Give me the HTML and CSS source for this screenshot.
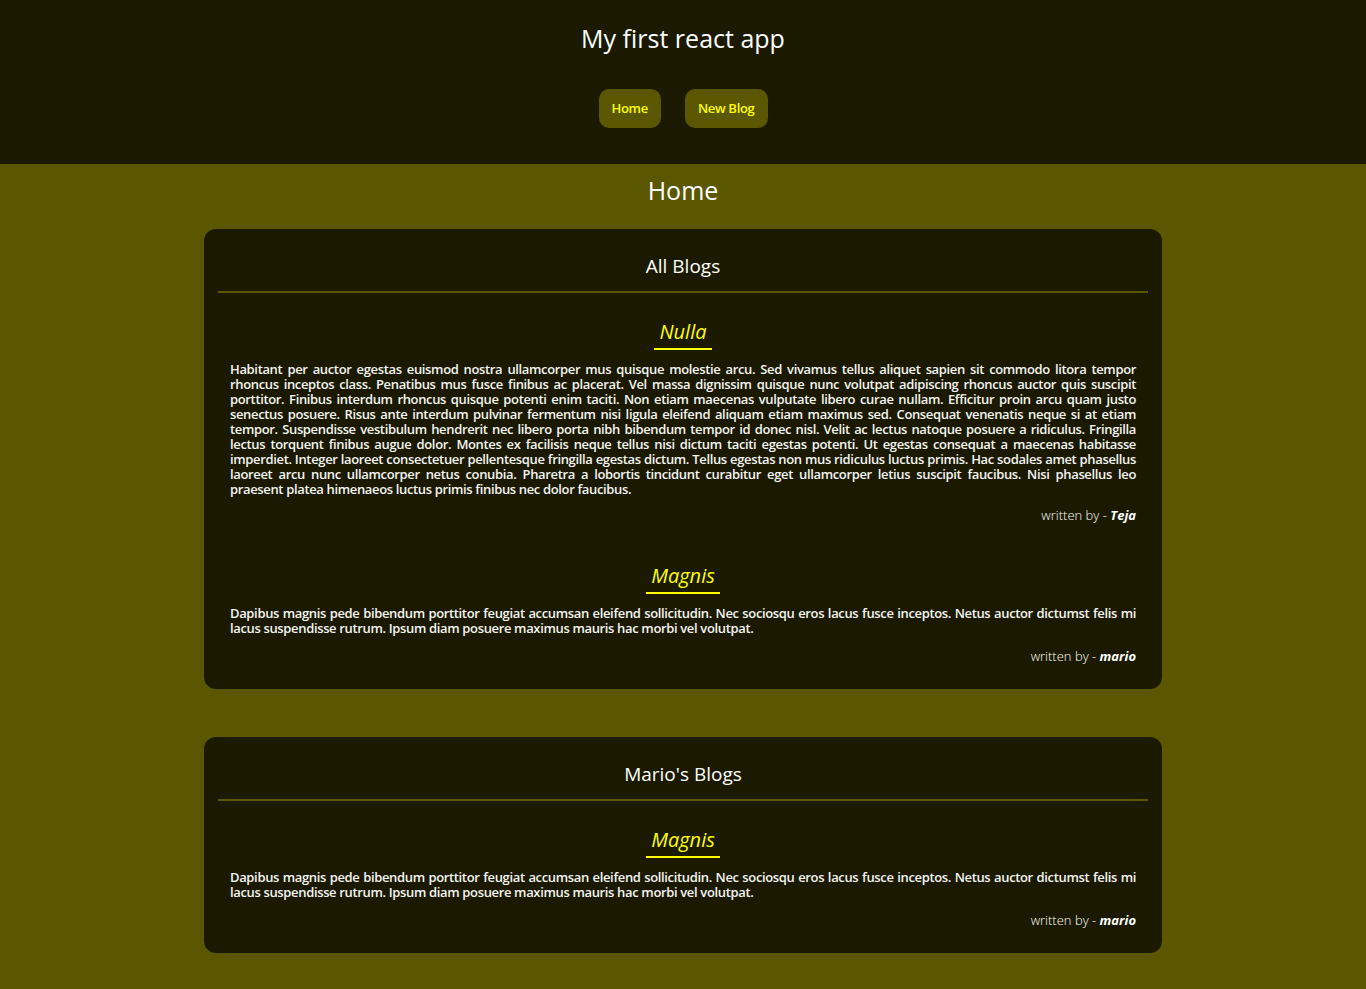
FILE: index.html
```html
<!DOCTYPE html>
<html lang="en">
<head>
<meta charset="utf-8">
<title>My first react app</title>
<link rel="stylesheet" href="styles.css">
</head>
<body>
<header class="navbar">
  <h1 class="app-title">My first react app</h1>
  <nav class="links">
    <a class="nav-btn" href="#">Home</a>
    <a class="nav-btn" href="#">New Blog</a>
  </nav>
</header>
<main class="content">
  <h2 class="page-title">Home</h2>

  <section class="blog-list">
    <h3 class="list-title">All Blogs</h3>
    <div class="blog-preview">
      <h4 class="blog-title">Nulla</h4>
      <p class="blog-body">Habitant per auctor egestas euismod nostra ullamcorper mus quisque molestie arcu. Sed vivamus tellus aliquet sapien sit commodo litora tempor rhoncus inceptos class. Penatibus mus fusce finibus ac placerat. Vel massa dignissim quisque nunc volutpat adipiscing rhoncus auctor quis suscipit porttitor. Finibus interdum rhoncus quisque potenti enim taciti. Non etiam maecenas vulputate libero curae nullam. Efficitur proin arcu quam justo senectus posuere. Risus ante interdum pulvinar fermentum nisi ligula eleifend aliquam etiam maximus sed. Consequat venenatis neque si at etiam tempor. Suspendisse vestibulum hendrerit nec libero porta nibh bibendum tempor id donec nisl. Velit ac lectus natoque posuere a ridiculus. Fringilla lectus torquent finibus augue dolor. Montes ex facilisis neque tellus nisi dictum taciti egestas potenti. Ut egestas consequat a maecenas habitasse imperdiet. Integer laoreet consectetuer pellentesque fringilla egestas dictum. Tellus egestas non mus ridiculus luctus primis. Hac sodales amet phasellus laoreet arcu nunc ullamcorper netus conubia. Pharetra a lobortis tincidunt curabitur eget ullamcorper letius suscipit faucibus. Nisi phasellus leo praesent platea himenaeos luctus primis finibus nec dolor faucibus.</p>
      <div class="author author-first">written by - <em class="author-name">Teja</em></div>
    </div>
    <div class="blog-preview">
      <h4 class="blog-title">Magnis</h4>
      <p class="blog-body">Dapibus magnis pede bibendum porttitor feugiat accumsan eleifend sollicitudin. Nec sociosqu eros lacus fusce inceptos. Netus auctor dictumst felis mi lacus suspendisse rutrum. Ipsum diam posuere maximus mauris hac morbi vel volutpat.</p>
      <div class="author">written by - <em class="author-name">mario</em></div>
    </div>
  </section>

  <section class="blog-list">
    <h3 class="list-title">Mario's Blogs</h3>
    <div class="blog-preview">
      <h4 class="blog-title">Magnis</h4>
      <p class="blog-body">Dapibus magnis pede bibendum porttitor feugiat accumsan eleifend sollicitudin. Nec sociosqu eros lacus fusce inceptos. Netus auctor dictumst felis mi lacus suspendisse rutrum. Ipsum diam posuere maximus mauris hac morbi vel volutpat.</p>
      <div class="author">written by - <em class="author-name">mario</em></div>
    </div>
  </section>
</main>
</body>
</html>
```

FILE: styles.css
```css
html, body {
  margin: 0;
  padding: 0;
}
body {
  background: #5a5700;
  color: #ffffff;
  font-family: "Open Sans", "DejaVu Sans", sans-serif;
  min-height: 989px;
}
.navbar {
  background: #1b1a00;
  padding: 19px 0 36px;
  display: flex;
  flex-direction: column;
  align-items: center;
}
.app-title {
  margin: 0;
  font-size: 25px;
  line-height: 38px;
  font-weight: 500;
  color: #ffffff;
}
.links {
  margin-top: 32px;
  display: flex;
  gap: 24px;
}
.nav-btn {
  display: block;
  background: #5a5700;
  color: #ffff00;
  text-decoration: none;
  font-size: 13px;
  font-weight: 600;
  line-height: 15px;
  padding: 12px 13px;
  border-radius: 10px;
  letter-spacing: -0.3px;
}
.content {
  padding: 7px 0 36px;
  display: flex;
  flex-direction: column;
  align-items: center;
}
.page-title {
  margin: 0 0 20px;
  font-size: 25px;
  line-height: 38px;
  font-weight: 500;
}
.blog-list {
  box-sizing: border-box;
  width: 958px;
  background: #1b1a00;
  border-radius: 12px;
  padding: 14px 14px 25px;
  margin-bottom: 48px;
}
.list-title {
  margin: 11px 0 0;
  padding-bottom: 13px;
  border-bottom: 2px solid #5a5700;
  text-align: center;
  font-size: 19px;
  line-height: 24px;
  font-weight: 500;
}
.blog-preview {
  padding: 27px 12px 0;
  display: flex;
  flex-direction: column;
}
.blog-preview + .blog-preview {
  margin-top: 14px;
}
.blog-title {
  align-self: center;
  margin: 0;
  padding: 0 5px 4px;
  border-bottom: 2px solid #ffff00;
  color: #ffff00;
  font-size: 20px;
  line-height: 24px;
  font-style: italic;
  font-weight: 500;
}
.blog-body {
  margin: 12px 0 0;
  font-size: 13px;
  line-height: 15px;
  font-weight: 600;
  text-align: justify;
  color: #f4f4f4;
  letter-spacing: -0.35px;
}
.author {
  margin-top: 12px;
  text-align: right;
  font-size: 13px;
  line-height: 16px;
  font-weight: 300;
}
.author-first {
  margin-top: 10px;
}
.author-name {
  font-weight: 700;
  font-style: italic;
}
```
